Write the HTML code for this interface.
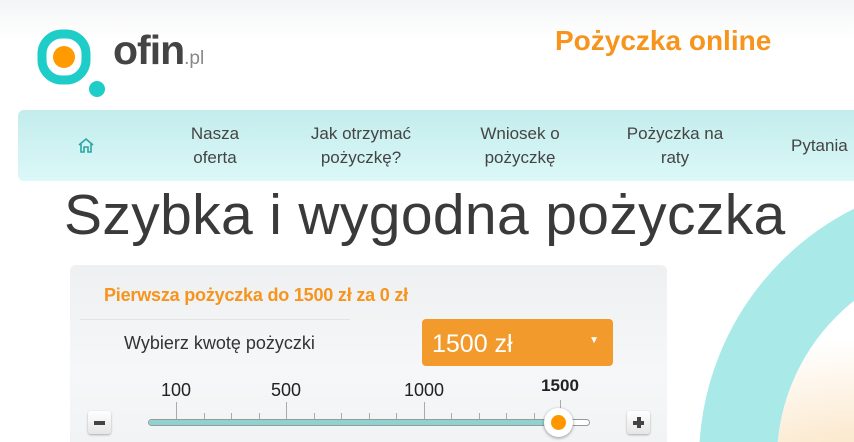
<!DOCTYPE html><html style="width:854px;height:442px;overflow:hidden"><head><meta charset="utf-8"><style>
*{margin:0;padding:0;box-sizing:border-box}
body{width:854px;height:442px;overflow:hidden;position:relative;font-family:"Liberation Sans",sans-serif;background:linear-gradient(#f4f5f6 0,#fff 40px,#fff);}
.abs{position:absolute}
.nav{left:18px;top:110px;width:836px;height:71px;border-radius:6px 0 0 6px;background:linear-gradient(#c3ecec,#dcf8f8)}
.ni{position:absolute;top:12px;font-size:17px;line-height:24px;color:#444;text-align:center;transform:translateX(-50%);white-space:nowrap}
.panel{left:70px;top:265px;width:597px;height:177px;border-radius:6px 6px 0 0;background:linear-gradient(#eef0f1,#f6f7f8 60%,#f1f3f4)}
.tick{position:absolute;width:1px;background:#aaa}
.lbl{position:absolute;font-size:18px;color:#222;transform:translateX(-50%)}
.btn{position:absolute;width:23px;height:23px;border-radius:3px;background:linear-gradient(#fff,#e6e6e6);box-shadow:0 1px 2px rgba(0,0,0,.3)}
</style></head><body>
<svg class="abs" style="left:0;top:0" width="854" height="442">
<defs><radialGradient id="og" cx="0.2" cy="0.9" r="0.7"><stop offset="0" stop-color="#f6c27a"/><stop offset="1" stop-color="#fff"/></radialGradient></defs>
<circle cx="980" cy="460" r="203" fill="url(#og)"/>
<circle cx="980" cy="460" r="242" fill="none" stroke="#a9e9e8" stroke-width="78"/>
<rect x="42" y="34" width="44" height="46" rx="20" fill="none" stroke="#1ecdc7" stroke-width="9"/>
<circle cx="64" cy="57" r="11" fill="#ff9a00"/>
<circle cx="97" cy="89" r="8" fill="#1ecdc7"/>
</svg>
<div class="abs" style="left:113px;top:27px;font-size:41px;font-weight:bold;color:#444;letter-spacing:-1px">ofin<span style="font-size:19px;font-weight:normal;color:#888;letter-spacing:0">.pl</span></div>
<div class="abs" style="left:555px;top:25px;font-size:28px;font-weight:bold;color:#f7941d">Pożyczka online</div>
<div class="abs nav">
<svg class="abs" style="left:59px;top:27px" width="18" height="17" viewBox="0 0 18 17"><path d="M2 8 L9 2 L16 8 M4 7 V15 H7 V10 H11 V15 H14 V7" fill="none" stroke="#2aa6a2" stroke-width="1.6"/></svg>
<div class="ni" style="left:197px">Nasza<br>oferta</div>
<div class="ni" style="left:343px">Jak otrzymać<br>pożyczkę?</div>
<div class="ni" style="left:502px">Wniosek o<br>pożyczkę</div>
<div class="ni" style="left:657px">Pożyczka na<br>raty</div>
<div class="ni" style="left:773px;top:24px;transform:none">Pytania</div>
</div>
<div class="abs" style="left:64px;top:182px;font-size:57px;color:#3a3a3a;white-space:nowrap;letter-spacing:0.35px">Szybka i wygodna pożyczka</div>
<div class="abs panel">
<div class="abs" style="left:34px;top:20px;font-size:18px;font-weight:bold;color:#f7941d;letter-spacing:-0.2px">Pierwsza pożyczka do 1500 zł za 0 zł</div>
<div class="abs" style="left:10px;top:54px;width:270px;height:1px;background:#e2e5e6"></div>
<div class="abs" style="left:54px;top:68px;font-size:18px;color:#333">Wybierz kwotę pożyczki</div>
<div class="abs" style="left:352px;top:54px;width:191px;height:47px;border-radius:4px;background:#f39a2c;color:#fff;font-size:25px;padding:11px 0 0 10px">1500 zł<span style="position:absolute;right:14px;top:16px;font-size:10px">▼</span></div>
</div>
<div class="lbl" style="left:176px;top:380px">100</div>
<div class="lbl" style="left:286px;top:380px">500</div>
<div class="lbl" style="left:424px;top:380px">1000</div>
<div class="lbl" style="left:560px;top:376px;font-weight:bold;font-size:17px">1500</div>
<div class="tick" style="left:176px;top:402px;height:20px"></div>
<div class="tick" style="left:204px;top:413px;height:9px"></div>
<div class="tick" style="left:231px;top:413px;height:9px"></div>
<div class="tick" style="left:259px;top:413px;height:9px"></div>
<div class="tick" style="left:286px;top:402px;height:20px"></div>
<div class="tick" style="left:314px;top:413px;height:9px"></div>
<div class="tick" style="left:341px;top:413px;height:9px"></div>
<div class="tick" style="left:369px;top:413px;height:9px"></div>
<div class="tick" style="left:396px;top:413px;height:9px"></div>
<div class="tick" style="left:424px;top:402px;height:20px"></div>
<div class="tick" style="left:451px;top:413px;height:9px"></div>
<div class="tick" style="left:479px;top:413px;height:9px"></div>
<div class="tick" style="left:506px;top:413px;height:9px"></div>
<div class="tick" style="left:534px;top:413px;height:9px"></div>
<div class="tick" style="left:560px;top:400px;height:10px"></div>
<div class="abs" style="left:148px;top:419px;width:442px;height:7px;border-radius:4px;background:#fff;border:1px solid #999"></div>
<div class="abs" style="left:149px;top:420px;width:410px;height:5px;border-radius:3px;background:#8fd3d1"></div>
<div class="abs" style="left:544px;top:408px;width:29px;height:29px;border-radius:50%;background:#fff;box-shadow:0 1px 3px rgba(0,0,0,.4)"></div>
<div class="abs" style="left:551px;top:415px;width:15px;height:15px;border-radius:50%;background:#ff9800"></div>
<div class="btn" style="left:88px;top:411px"><div class="abs" style="left:6px;top:10px;width:11px;height:4px;background:#444"></div></div>
<div class="btn" style="left:627px;top:411px"><div class="abs" style="left:6px;top:10px;width:11px;height:4px;background:#444"></div><div class="abs" style="left:10px;top:6px;width:4px;height:11px;background:#444"></div></div>
</body></html>
